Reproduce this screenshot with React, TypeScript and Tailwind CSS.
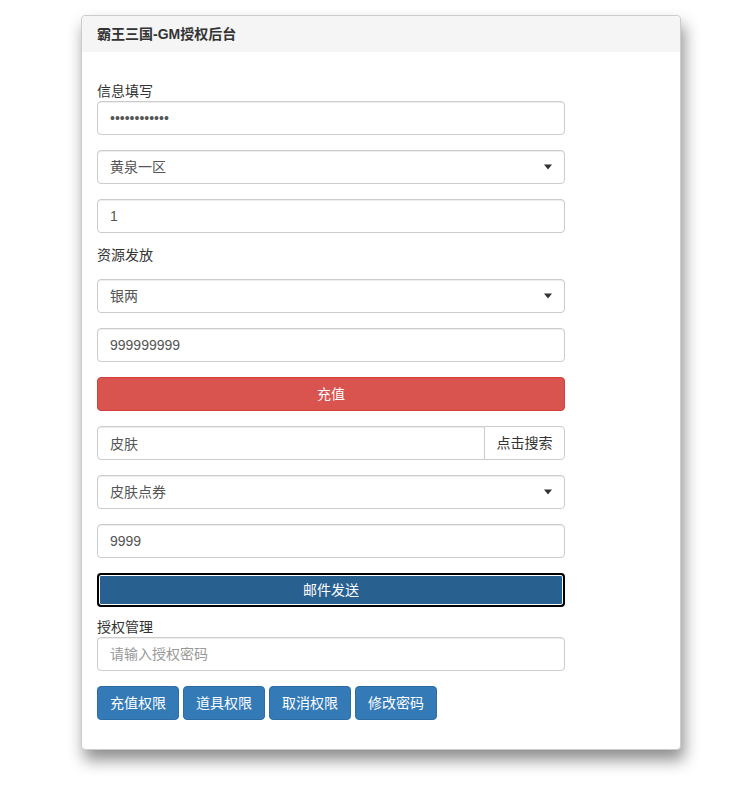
import React from 'react';

const inputCls =
  'block w-full h-[34px] px-3 py-[6px] text-sm leading-5 text-[#555] bg-white border border-[#ccc] rounded shadow-[inset_0_1px_1px_rgba(0,0,0,0.075)] outline-none placeholder:text-[#999]';

const SelectBox = ({ value }: { value: string }) => (
  <div className="relative">
    <select className={`${inputCls} appearance-none`} defaultValue={value}>
      <option>{value}</option>
    </select>
    {/* caret */}
    <span className="pointer-events-none absolute right-[13px] top-1/2 -translate-y-1/2 w-0 h-0 border-l-[4px] border-r-[4px] border-t-[5px] border-l-transparent border-r-transparent border-t-[#333]" />
  </div>
);

const BlueBtn = ({ children }: { children: React.ReactNode }) => (
  <button className="h-[34px] px-3 text-sm leading-5 text-white bg-[#337ab7] border border-[#2e6da4] rounded">
    {children}
  </button>
);

export default function App() {
  return (
    <div className="min-h-[805px] bg-white pl-[81px] pt-[15px] text-sm leading-5 text-[#333] font-['Liberation_Sans','Noto_Sans_CJK_SC',sans-serif]">
      <div className="w-[600px] border border-[#ccc] rounded bg-white shadow-[3px_10px_16px_rgba(0,0,0,0.45)]">
        {/* header */}
        <div className="h-[36px] px-[15px] py-[8px] bg-[#f5f5f5] rounded-t font-bold text-[#333]">
          霸王三国-GM授权后台
        </div>

        {/* body */}
        <div className="px-[15px] pt-[29px] pb-[29px]">
          <div className="w-[468px]">
            <div>信息填写</div>
            <input type="password" className={inputCls} defaultValue="123456789012" />

            <div className="mt-[15px]">
              <SelectBox value="黄泉一区" />
            </div>

            <input className={`${inputCls} mt-[15px]`} defaultValue="1" />

            <div className="mt-3 mb-[14px]">资源发放</div>
            <SelectBox value="银两" />

            <input className={`${inputCls} mt-[15px]`} defaultValue="999999999" />

            <button className="mt-[15px] w-full h-[34px] text-sm text-white bg-[#d9534f] border border-[#d43f3a] rounded">
              充值
            </button>

            {/* search group */}
            <div className="mt-[15px] flex">
              <input className={`${inputCls} rounded-r-none`} defaultValue="皮肤" />
              <button className="shrink-0 w-[81px] h-[34px] -ml-px text-sm text-[#333] bg-white border border-[#ccc] rounded-r">
                点击搜索
              </button>
            </div>

            <div className="mt-[15px]">
              <SelectBox value="皮肤点券" />
            </div>

            <input className={`${inputCls} mt-[15px]`} defaultValue="9999" />

            <button className="mt-[15px] w-full h-[34px] text-sm text-white bg-[#286090] border-2 border-black rounded shadow-[inset_0_0_0_1px_white]">
              邮件发送
            </button>

            <div className="mt-[10px]">授权管理</div>
            <input className={inputCls} placeholder="请输入授权密码" />

            <div className="mt-[15px] flex gap-1">
              <BlueBtn>充值权限</BlueBtn>
              <BlueBtn>道具权限</BlueBtn>
              <BlueBtn>取消权限</BlueBtn>
              <BlueBtn>修改密码</BlueBtn>
            </div>
          </div>
        </div>
      </div>
    </div>
  );
}
